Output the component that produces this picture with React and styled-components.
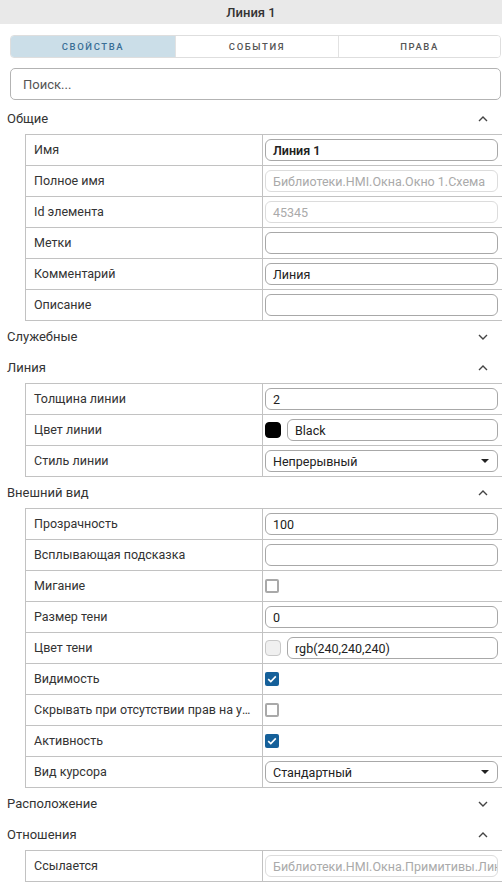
import styled, { createGlobalStyle } from 'styled-components'

const GlobalStyle = createGlobalStyle`
  html, body {
    margin: 0;
    padding: 0;
    background: #fff;
    overflow: hidden;
  }
  body {
    font-family: Roboto, "Liberation Sans", sans-serif;
    color: #333;
  }
`

const sections = [
  {
    title: 'Общие',
    open: true,
    rows: [
      { label: 'Имя', type: 'text', value: 'Линия 1', bold: true },
      { label: 'Полное имя', type: 'text', value: 'Библиотеки.HMI.Окна.Окно 1.Схема', disabled: true },
      { label: 'Id элемента', type: 'text', value: '45345', disabled: true },
      { label: 'Метки', type: 'text', value: '' },
      { label: 'Комментарий', type: 'text', value: 'Линия' },
      { label: 'Описание', type: 'text', value: '' },
    ],
  },
  { title: 'Служебные', open: false, rows: [] },
  {
    title: 'Линия',
    open: true,
    rows: [
      { label: 'Толщина линии', type: 'text', value: '2' },
      { label: 'Цвет линии', type: 'color', color: '#000', value: 'Black' },
      { label: 'Стиль линии', type: 'select', value: 'Непрерывный' },
    ],
  },
  {
    title: 'Внешний вид',
    open: true,
    rows: [
      { label: 'Прозрачность', type: 'text', value: '100' },
      { label: 'Всплывающая подсказка', type: 'text', value: '' },
      { label: 'Мигание', type: 'check', checked: false },
      { label: 'Размер тени', type: 'text', value: '0' },
      { label: 'Цвет тени', type: 'color', color: '#f0f0f0', value: 'rgb(240,240,240)' },
      { label: 'Видимость', type: 'check', checked: true },
      { label: 'Скрывать при отсутствии прав на управление', type: 'check', checked: false },
      { label: 'Активность', type: 'check', checked: true },
      { label: 'Вид курсора', type: 'select', value: 'Стандартный' },
    ],
  },
  { title: 'Расположение', open: false, rows: [] },
  {
    title: 'Отношения',
    open: true,
    rows: [
      { label: 'Ссылается', type: 'text', value: 'Библиотеки.HMI.Окна.Примитивы.Линия', disabled: true },
    ],
  },
]

const tabs = ['Свойства', 'События', 'Права']

const Chevron = ({ up }) => (
  <svg width="10" height="6" viewBox="0 0 10 6">
    <path
      d={up ? 'M1 5 L5 1 L9 5' : 'M1 1 L5 5 L9 1'}
      fill="none"
      stroke="#444"
      strokeWidth="1.4"
    />
  </svg>
)

const Check = () => (
  <svg width="10" height="8" viewBox="0 0 10 8">
    <path d="M1.2 4.2 L3.8 6.6 L8.8 1.4" fill="none" stroke="#fff" strokeWidth="1.6" />
  </svg>
)

const Value = ({ row }) => {
  if (row.type === 'check') {
    return <CheckBox checked={row.checked}>{row.checked && <Check />}</CheckBox>
  }
  if (row.type === 'color') {
    return (
      <>
        <Swatch color={row.color} />
        <Field>{row.value}</Field>
      </>
    )
  }
  if (row.type === 'select') {
    return (
      <Field>
        <span>{row.value}</span>
        <Caret />
      </Field>
    )
  }
  return (
    <Field disabled={row.disabled} bold={row.bold}>
      {row.value}
    </Field>
  )
}

export default function App() {
  return (
    <>
      <GlobalStyle />
      <Panel>
        <Title>Линия 1</Title>
        <Tabs>
          {tabs.map((t, i) => (
            <Tab key={t} active={i === 0}>
              {t}
            </Tab>
          ))}
        </Tabs>
        <Search>Поиск...</Search>
        {sections.map((s) => (
          <section key={s.title}>
            <SectionHead>
              <span>{s.title}</span>
              <Chevron up={s.open} />
            </SectionHead>
            {s.open && (
              <Table>
                {s.rows.map((r) => (
                  <Row key={r.label}>
                    <Label>{r.label}</Label>
                    <Cell>
                      <Value row={r} />
                    </Cell>
                  </Row>
                ))}
              </Table>
            )}
          </section>
        ))}
      </Panel>
    </>
  )
}

const Panel = styled.div`
  width: 502px;
`

const Title = styled.div`
  height: 24px;
  background: #e9e9e9;
  display: flex;
  align-items: center;
  justify-content: center;
  font-size: 13px;
  font-weight: 500;
  color: #333;
`

const Tabs = styled.div`
  display: grid;
  grid-template-columns: 164px 163px 1fr;
  margin: 11px 1px 0 10px;
  height: 23px;
  box-sizing: border-box;
  border: 1px solid #dedede;
  border-radius: 4px;
  overflow: hidden;
`

const Tab = styled.div`
  display: flex;
  align-items: center;
  justify-content: center;
  font-size: 9.5px;
  font-weight: 500;
  letter-spacing: 1.6px;
  text-transform: uppercase;
  color: ${({ active }) => (active ? '#3a6f96' : '#555')};
  background: ${({ active }) => (active ? '#cbdee8' : '#fff')};
  & + & {
    border-left: 1px solid #e2e2e2;
  }
`

const Search = styled.div`
  margin: 10px 1px 3px 10px;
  height: 32px;
  box-sizing: border-box;
  border: 1px solid #b3b3b3;
  border-radius: 5px;
  padding-left: 12px;
  display: flex;
  align-items: center;
  font-size: 13px;
  color: #555;
`

const SectionHead = styled.div`
  height: 31px;
  display: flex;
  align-items: center;
  justify-content: space-between;
  padding: 0 14px 0 7px;
  font-size: 13px;
  color: #333;
`

const Table = styled.div`
  margin-left: 25px;
  border-left: 1px solid #c2c2c2;
  border-top: 1px solid #c2c2c2;
`

const Row = styled.div`
  display: grid;
  grid-template-columns: 237px 1fr;
  height: 31px;
  box-sizing: border-box;
  border-bottom: 1px solid #c2c2c2;
`

const Label = styled.div`
  display: block;
  padding: 0 6px 0 8px;
  border-right: 1px solid #c2c2c2;
  font-size: 12.5px;
  line-height: 30px;
  color: #333;
  min-width: 0;
  overflow: hidden;
  white-space: nowrap;
  text-overflow: ellipsis;
`

const Cell = styled.div`
  display: flex;
  align-items: center;
  gap: 6px;
  padding: 0 4px 0 2px;
  min-width: 0;
`

const Field = styled.div`
  flex: 1;
  min-width: 0;
  height: 22px;
  box-sizing: border-box;
  border: 1px solid ${({ disabled }) => (disabled ? '#dcdcdc' : '#a8a8a8')};
  border-radius: 6px;
  padding: 0 8px 0 7px;
  display: flex;
  align-items: center;
  justify-content: space-between;
  font-size: 12.5px;
  font-weight: ${({ bold }) => (bold ? 600 : 400)};
  color: ${({ disabled }) => (disabled ? '#aaa' : '#222')};
  white-space: nowrap;
  overflow: hidden;
`

const Swatch = styled.div`
  width: 16px;
  height: 16px;
  flex: none;
  border-radius: 4px;
  background: ${({ color }) => color};
  border: 1px solid ${({ color }) => (color === '#000' ? '#000' : '#c8c8c8')};
  box-sizing: border-box;
`

const CheckBox = styled.div`
  width: 14px;
  height: 14px;
  box-sizing: border-box;
  border-radius: 2px;
  border: ${({ checked }) => (checked ? 'none' : '2px solid #a9a9a9')};
  background: ${({ checked }) => (checked ? '#15609a' : '#fff')};
  display: flex;
  align-items: center;
  justify-content: center;
`

const Caret = styled.span`
  width: 0;
  height: 0;
  border-left: 4px solid transparent;
  border-right: 4px solid transparent;
  border-top: 4px solid #222;
`
